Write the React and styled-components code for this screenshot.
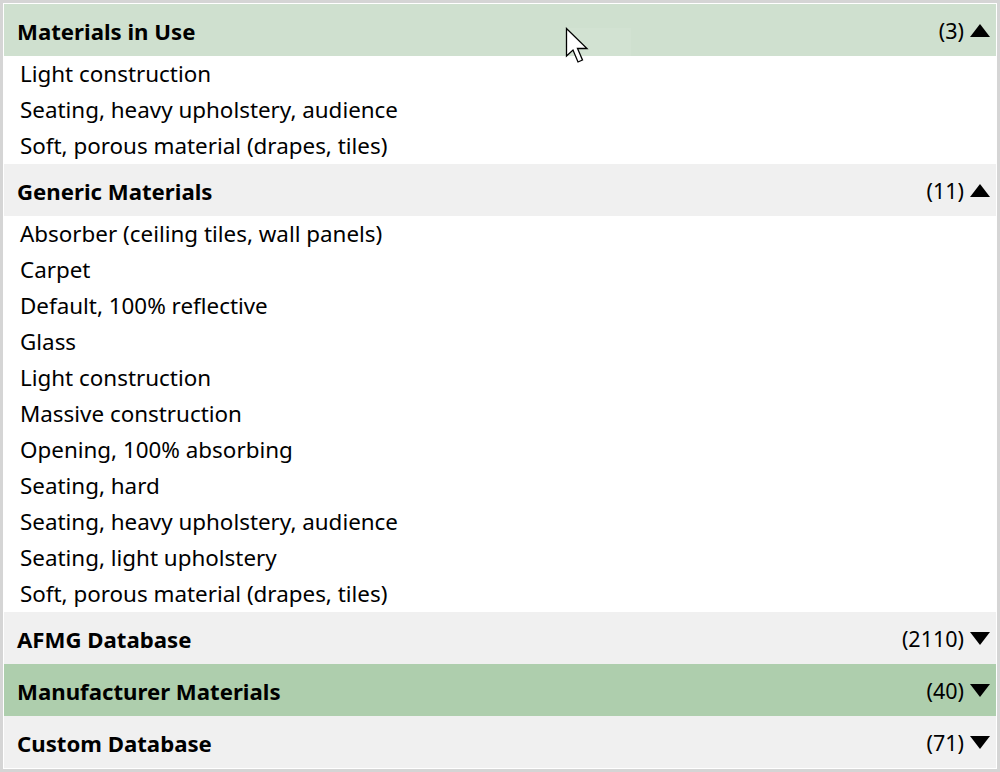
import React from 'react'
import styled, { createGlobalStyle } from 'styled-components'

const Global = createGlobalStyle`
  html, body {
    margin: 0;
    padding: 0;
    background: #fff;
  }
  body {
    font-family: 'Segoe UI', 'Noto Sans', 'Open Sans', sans-serif;
    color: #000;
  }
`

const Frame = styled.div`
  position: relative;
  box-sizing: border-box;
  width: 1000px;
  height: 772px;
  border: 3px solid #d5d5d5;
  padding: 1px;
  background: #fff;
  overflow: hidden;
  display: flex;
  flex-direction: column;
`

const Header = styled.div`
  display: flex;
  align-items: center;
  height: 52px;
  flex: none;
  padding: 0 6px 0 13px;
  background: ${p => p.$tone === 'active' ? '#cfe0cf' : p.$tone === 'hover' ? '#aecead' : '#f0f0f0'};
`

const Title = styled.div`
  flex: 1;
  font-size: 22.2px;
  font-weight: 700;
  padding-top: 3px;
`

const Count = styled.div`
  font-size: 21.5px;
  margin-right: 6px;
`

const List = styled.div`
  display: flex;
  flex-direction: column;
`

const Item = styled.div`
  height: 36px;
  line-height: 36px;
  padding-left: 16px;
  font-size: 22.4px;
  white-space: nowrap;
`

const Glow = styled.div`
  position: absolute;
  left: 563px;
  top: 25px;
  width: 65px;
  height: 31px;
  background: rgba(255, 255, 255, 0.08);
`

const Cursor = styled.svg`
  position: absolute;
  left: 562px;
  top: 24px;
`

const Arrow = ({ up }) => (
  <svg width="20" height="13" viewBox="0 0 20 13">
    {up
      ? <polygon points="10,0 20,13 0,13" fill="#000" />
      : <polygon points="0,0 20,0 10,13" fill="#000" />}
  </svg>
)

const sections = [
  {
    title: 'Materials in Use',
    count: 3,
    tone: 'active',
    open: true,
    items: [
      'Light construction',
      'Seating, heavy upholstery, audience',
      'Soft, porous material (drapes, tiles)',
    ],
  },
  {
    title: 'Generic Materials',
    count: 11,
    open: true,
    items: [
      'Absorber (ceiling tiles, wall panels)',
      'Carpet',
      'Default, 100% reflective',
      'Glass',
      'Light construction',
      'Massive construction',
      'Opening, 100% absorbing',
      'Seating, hard',
      'Seating, heavy upholstery, audience',
      'Seating, light upholstery',
      'Soft, porous material (drapes, tiles)',
    ],
  },
  { title: 'AFMG Database', count: 2110 },
  { title: 'Manufacturer Materials', count: 40, tone: 'hover' },
  { title: 'Custom Database', count: 71 },
]

export default function App() {
  return (
    <>
      <Global />
      <Frame>
        {sections.map(s => (
          <React.Fragment key={s.title}>
            <Header $tone={s.tone}>
              <Title>{s.title}</Title>
              <Count>({s.count})</Count>
              <Arrow up={s.open} />
            </Header>
            {s.open && (
              <List>
                {s.items.map((it, i) => <Item key={i}>{it}</Item>)}
              </List>
            )}
          </React.Fragment>
        ))}
        <Glow />
        <Cursor width="26" height="40" viewBox="0 0 26 40">
          <path d="M1.5 1.5 L1.5 29 L8 23 L13 35 L17.5 33 L12.5 21.5 L22 21.5 Z" fill="#fff" stroke="#000" strokeWidth="1.3" strokeLinejoin="miter" />
        </Cursor>
      </Frame>
    </>
  )
}
